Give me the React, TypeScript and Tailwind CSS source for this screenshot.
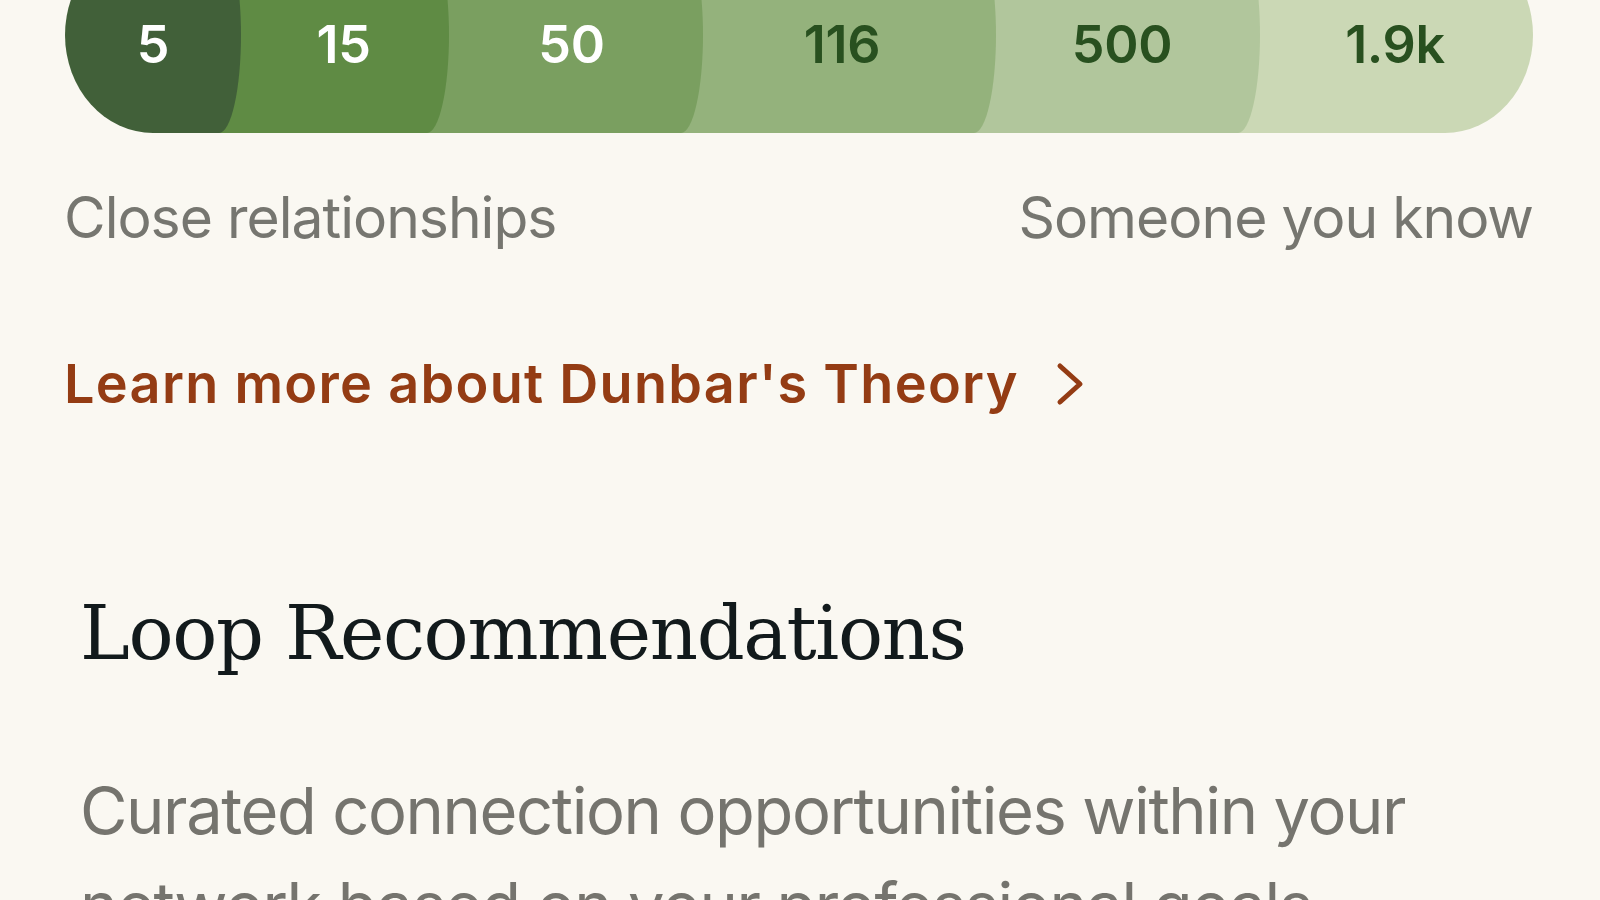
import React from 'react';

interface Segment {
  label: string;
  className: string;
}

// Dunbar circles, innermost first
const segments: Segment[] = [
  { label: '5', className: 'z-[6] w-[176px] bg-[#416039] text-white rounded-r-[22px_50%]' },
  { label: '15', className: 'z-[5] -ml-[40px] w-[248px] pl-[40px] pr-[3px] bg-[#5f8b44] text-white rounded-r-[22px_50%]' },
  { label: '50', className: 'z-[4] -ml-[40px] w-[294px] pl-[40px] pr-[9px] bg-[#7a9f60] text-white rounded-r-[22px_50%]' },
  { label: '116', className: 'z-[3] -ml-[40px] w-[333px] pl-[40px] pr-[15px] bg-[#94b27c] text-[#28501f] rounded-r-[22px_50%]' },
  { label: '500', className: 'z-[2] -ml-[40px] w-[304px] pl-[40px] pr-[12px] bg-[#b1c69c] text-[#28501f] rounded-r-[22px_50%]' },
  { label: '1.9k', className: 'z-[1] -ml-[40px] w-[313px] pl-[40px] pr-[3px] bg-[#cbd8b5] text-[#28501f]' },
];

const DunbarBar = () => (
  <div className="ml-[65px] -mt-[63px] flex h-[196px] w-[1468px] overflow-hidden rounded-[88px/98px]">
    {segments.map((s) => (
      <div
        key={s.label}
        className={`relative flex h-full shrink-0 items-center justify-center pt-[20px] text-[52px] font-semibold leading-none tracking-[-0.3px] ${s.className}`}
      >
        {s.label}
      </div>
    ))}
  </div>
);

const Chevron = () => (
  <svg width="30" height="44" viewBox="0 0 30 44" fill="none" className="ml-[36px] shrink-0">
    <path d="M5 4 L25 22 L5 40" stroke="#943c14" strokeWidth="5" strokeLinecap="round" strokeLinejoin="round" />
  </svg>
);

export default function App() {
  return (
    <div className="h-[900px] w-full overflow-hidden bg-[#faf8f2] font-['Inter',sans-serif]">
      <DunbarBar />

      <div className="ml-[64px] mr-[67px] mt-[56px] flex justify-between text-[57px] leading-none tracking-[-1px] text-[#767670]">
        <span>Close relationships</span>
        <span>Someone you know</span>
      </div>

      <a className="ml-[64px] mt-[111px] flex items-center text-[54px] font-semibold leading-none tracking-[1.3px] text-[#943c14]">
        <span>Learn more about Dunbar's Theory</span>
        <Chevron />
      </a>

      <div className="px-[80px]">
        <h2 className="mt-[185px] font-['DejaVu_Serif',serif] text-[75px] leading-none tracking-[-1.4px] text-[#121a1c]">
          Loop Recommendations
        </h2>
        <p className="mt-[92px] w-[1400px] text-[65px] leading-[95px] tracking-[-1.4px] text-[#75746e]">
          Curated connection opportunities within your network based on your professional goals
        </p>
      </div>
    </div>
  );
}
